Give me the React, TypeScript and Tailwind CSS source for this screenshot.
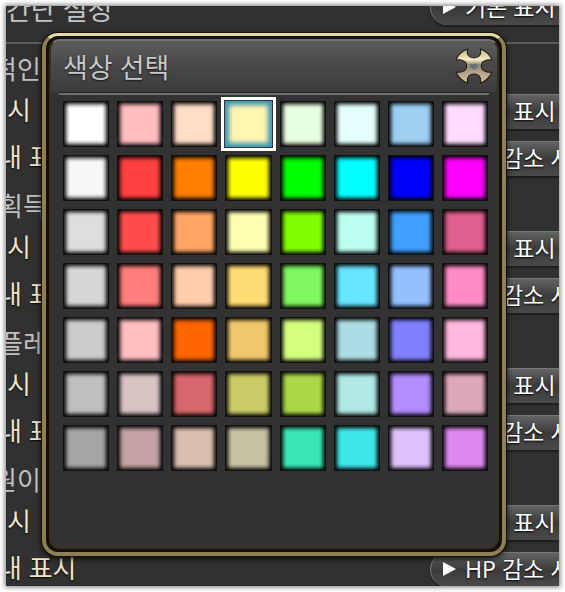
import { useState } from "react";

const SWATCHES: string[][] = [
  ["#ffffff", "#ffbdbf", "#ffdec8", "#fff6b0", "#e7ffe0", "#e4fffd", "#9ccff2", "#ffdcff"],
  ["#f7f7f7", "#ff4040", "#ff8000", "#ffff00", "#00ff00", "#00ffff", "#0000ff", "#ff00ff"],
  ["#dedede", "#ff4c4a", "#ffa666", "#ffffb2", "#80ff00", "#bbfff0", "#409fff", "#e06090"],
  ["#d6d6d6", "#ff7e7c", "#ffcdac", "#ffdc73", "#80f860", "#66e6ff", "#94c0ff", "#ff8cc6"],
  ["#cccccc", "#ffbebf", "#ff6600", "#f0c86c", "#d4ff7e", "#acdce4", "#8080ff", "#ffb8de"],
  ["#bfbfbf", "#d8c2c2", "#d6676c", "#cccc66", "#acd848", "#b0e8e4", "#b38cff", "#dea8bc"],
  ["#a6a6a6", "#c6a2a2", "#d8beae", "#c8c2a0", "#3ae6b4", "#3ee8e8", "#dec0fa", "#de88f2"],
];

const GROUPS = [
  { title: "적인", titleClass: "-ml-[13px]" },
  { title: "획득", titleClass: "-ml-[7px]" },
  { title: "플레이어", titleClass: "-ml-[7px]" },
  { title: "원이", titleClass: "-ml-[13px]" },
];

function Choice({ id, text }: { id: string; text: string }) {
  return (
    <button
      id={id}
      type="button"
      className="flex h-[35px] w-[129px] shrink-0 items-center gap-[9px] overflow-hidden rounded-l-full border-t border-l border-[#767876] bg-linear-to-b from-[#626462] via-[#3b3b3b] to-[#4a4a4a] pb-[2px] pl-[12px] text-[23px] leading-[32px] whitespace-nowrap text-white shadow-[0_2px_2px_#1c1c1c] [text-shadow:0_1px_2px_#000]"
    >
      <svg width="13" height="14" viewBox="0 0 13 14" className="shrink-0" aria-hidden="true">
        <path d="M0 0 L13 7 L0 14 Z" fill="#fff" />
      </svg>
      <span>{text}</span>
    </button>
  );
}

function SettingRow({ id, label, labelClass, value }: { id: string; label: string; labelClass: string; value: string }) {
  return (
    <div className="mb-3 flex h-[35px] items-start justify-between">
      <label
        htmlFor={id}
        className={"text-[26px] leading-[32px] whitespace-nowrap text-[#f0e4cb] [text-shadow:0_1px_2px_#000] " + labelClass}
      >
        {label}
      </label>
      <Choice id={id} text={value} />
    </div>
  );
}

function CloseIcon() {
  return (
    <svg width="38" height="36" viewBox="0 0 36 36" preserveAspectRatio="none" aria-hidden="true">
      <defs>
        <linearGradient id="brass" x1="0" y1="0" x2="0" y2="1">
          <stop offset="0" stopColor="#c4b482" />
          <stop offset="0.32" stopColor="#f4ebbf" />
          <stop offset="0.46" stopColor="#8d8778" />
          <stop offset="0.72" stopColor="#b9a58c" />
          <stop offset="1" stopColor="#d2c3aa" />
        </linearGradient>
      </defs>
      <path
        d="M12 1 Q4 4 1 12 Q5 11 8 13 Q11 14 11 18 Q11 22 8 23 Q5 25 1 24 Q4 32 12 35 Q11 31 13 28 Q15 26 18 26 Q21 26 23 28 Q25 31 24 35 Q32 32 35 24 Q31 25 28 23 Q25 22 25 18 Q25 14 28 13 Q31 11 35 12 Q32 4 24 1 Q25 5 23 8 Q21 10 18 10 Q15 10 13 8 Q11 5 12 1 Z"
        fill="url(#brass)"
        stroke="#241d14"
        strokeWidth="1"
        strokeLinejoin="round"
      />
      <path d="M15 16 L21 16 L22 19 L18 22 L14 19 Z" fill="#69727a" />
    </svg>
  );
}

function ColorDialog() {
  const [selected, setSelected] = useState("0-3");
  return (
    <section
      role="dialog"
      aria-labelledby="dialog-title"
      className="absolute top-[27px] right-[53px] left-[36px] rounded-[16px] border-4 border-t-[3px] border-x-[#8f8052] border-t-[#e2daa0] border-b-[#8d8058] bg-[#15100b] p-[3px] shadow-[0_0_0_1px_#16110a,0_2px_6px_#000]"
    >
      <div className="rounded-[11px] border-2 border-[#37301f] border-t-[#77706b] bg-[#323232] px-2 pt-px pb-[76px]">
        <header className="-mx-2 -mt-px flex h-[51px] items-center justify-between rounded-t-[9px] bg-linear-to-b from-[#5d5c5d] via-[#484848] to-[#3c3c3c] pr-1 pl-3">
          <h1 id="dialog-title" className="pt-[2px] text-[27px] leading-[40px] text-[#c8c8c8] [text-shadow:0_1px_2px_#111]">
            색상 선택
          </h1>
          <button type="button" aria-label="닫기" className="block pb-[2px]">
            <CloseIcon />
          </button>
        </header>
        <div className="h-[3px] border-t border-[#222222] bg-[#707070]" />
        <div role="radiogroup" aria-labelledby="dialog-title" className="mt-[6px] grid grid-cols-8 gap-2 pr-px pl-1">
          {SWATCHES.map((row, r) =>
            row.map((color, c) => {
              const key = r + "-" + c;
              return (
                <input
                  key={key}
                  type="radio"
                  name="color"
                  aria-label={color}
                  checked={selected === key}
                  onChange={() => setSelected(key)}
                  style={{ backgroundColor: color }}
                  className="h-[46px] w-full appearance-none shadow-[inset_0_0_0_1px_#111,inset_0_0_4px_3px_#000] checked:shadow-[inset_0_0_5px_4px_#3c93b5] checked:outline-3 checked:outline-offset-1 checked:outline-white"
                />
              );
            }),
          )}
        </div>
      </div>
    </section>
  );
}

export default function App() {
  return (
    <div className="h-screen bg-white p-[6px] font-['Noto_Sans','Noto_Sans_CJK_KR',sans-serif]">
      <main className="relative h-full overflow-hidden bg-[#313131] shadow-[0_0_5px_1px_#777]">
        <div className="-mt-4 flex h-[35px] items-start justify-between">
          <h2 className="text-[27px] leading-[40px] whitespace-nowrap text-[#c4c4c4]">간단 설정</h2>
          <Choice id="default-view" text="기본 표시" />
        </div>
        <div className="mt-[17px] mb-[7px] h-[2px] bg-[#5c5c5c]" />
        {GROUPS.map((group, i) => (
          <div key={group.title}>
            <h3 className={"mb-[7px] text-[26px] leading-[36px] whitespace-nowrap text-[#c0c0c0] " + group.titleClass}>
              {group.title}
            </h3>
            <SettingRow id={"always-" + i} label="표시" labelClass="-ml-[23px]" value="항상 표시" />
            <SettingRow id={"reduced-" + i} label="내 표시" labelClass="-ml-[8px]" value="HP 감소 시" />
          </div>
        ))}
        <ColorDialog />
      </main>
    </div>
  );
}
